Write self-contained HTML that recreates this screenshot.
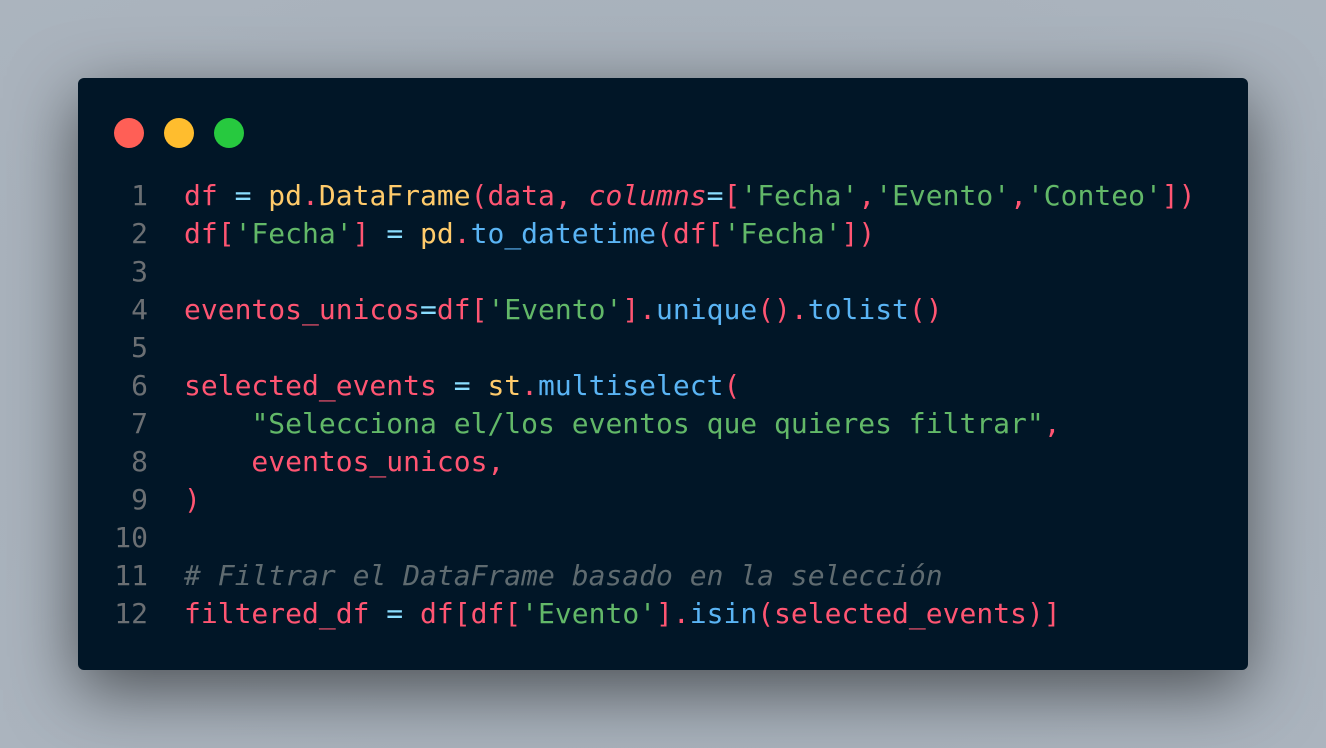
<!DOCTYPE html>
<html><head><meta charset="utf-8"><style>
html,body{margin:0;padding:0;width:1326px;height:748px;overflow:hidden;background:radial-gradient(ellipse at center,#a3adb7 0%,#abb4be 100%);}
.win{position:absolute;left:78px;top:78px;width:1170px;height:592px;background:#011627;border-radius:6px;box-shadow:0 20px 68px rgba(0,0,0,0.55);}
.dot{position:absolute;top:40px;width:30px;height:30px;border-radius:50%;}
pre{position:absolute;margin:0;top:99px;font-family:"DejaVu Sans Mono","Liberation Mono",monospace;font-size:28px;line-height:38px;}
.ln{left:20px;width:50px;text-align:right;color:#6b6f73;}
.code{left:106px;color:#ff5572;}
.r{color:#ff5572}.y{color:#ffcb6b}.c{color:#89ddff}.g{color:#62b868}.b{color:#5ab4f4}.i{font-style:italic}.cm{color:#5f6b70;font-style:italic}
</style></head><body>
<div class="win">
<div class="dot" style="left:36px;background:#ff5f56"></div>
<div class="dot" style="left:86px;background:#ffbd2e"></div>
<div class="dot" style="left:136px;background:#27c93f"></div>
<pre class="ln">1
2
3
4
5
6
7
8
9
10
11
12</pre>
<pre class="code"><span class="r">df</span> <span class="c">=</span> <span class="y">pd</span><span class="r">.</span><span class="y">DataFrame</span>(data, <span class="i">columns</span><span class="c">=</span>[<span class="g">'Fecha'</span>,<span class="g">'Evento'</span>,<span class="g">'Conteo'</span>])
df[<span class="g">'Fecha'</span>] <span class="c">=</span> <span class="y">pd</span>.<span class="b">to_datetime</span>(df[<span class="g">'Fecha'</span>])

eventos_unicos<span class="c">=</span>df[<span class="g">'Evento'</span>].<span class="b">unique</span>().<span class="b">tolist</span>()

selected_events <span class="c">=</span> <span class="y">st</span>.<span class="b">multiselect</span>(
    <span class="g">"Selecciona el/los eventos que quieres filtrar"</span>,
    eventos_unicos,
)

<span class="cm"># Filtrar el DataFrame basado en la selección</span>
filtered_df <span class="c">=</span> df[df[<span class="g">'Evento'</span>].<span class="b">isin</span>(selected_events)]</pre>
</div>
</body></html>
